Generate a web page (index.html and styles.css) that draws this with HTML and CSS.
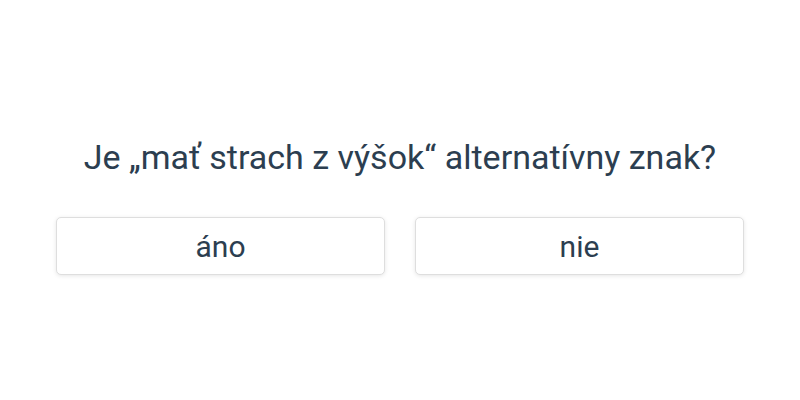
FILE: index.html
```html
<!DOCTYPE html>
<html lang="sk">
<head>
    <meta charset="UTF-8">
    <meta name="viewport" content="width=device-width, initial-scale=1.0">
    <title>Kvíz</title>
    <link rel="stylesheet" href="styles.css">
</head>
<body>
    <div id="quiz">
        <h2 class="question">Je „mať strach z výšok“ alternatívny znak?</h2>
        <div class="answers">
            <button class="answer">áno</button>
            <button class="answer">nie</button>
        </div>
    </div>
</body>
</html>
```

FILE: styles.css
```css
body {
    font-family: Roboto, "Liberation Sans", sans-serif;
    display: flex;
    justify-content: center;
    align-items: center;
    height: 100vh;
    box-sizing: border-box;
    padding-top: 12px;
    margin: 0;
    background-color: #fff;
    color: #2c3e50;
}
#quiz {
    width: 688px;
    text-align: center;
}
.question {
    font-size: 34px;
    font-weight: 400;
    line-height: 40px;
    margin: 0 0 40px;
}
.answers {
    display: flex;
    gap: 30px;
}
.answer {
    flex: 1;
    height: 58px;
    font-family: inherit;
    font-size: 30px;
    color: #2c3e50;
    background-color: #fff;
    border: 1px solid #dedede;
    border-radius: 5px;
    box-shadow: 0px 1px 4px rgba(0, 0, 0, 0.1);
    cursor: pointer;
}
```
